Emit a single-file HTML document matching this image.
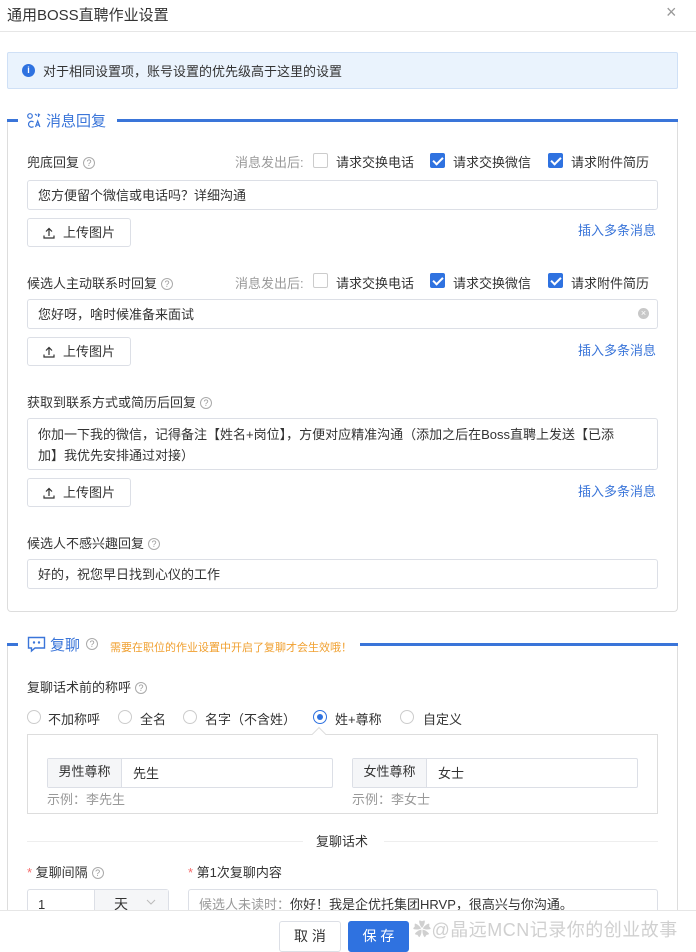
<!DOCTYPE html>
<html><head><meta charset="utf-8"><style>
*{box-sizing:border-box;margin:0;padding:0}
html,body{width:696px;height:952px;overflow:hidden}
body{background:#fff;font-family:"Liberation Sans","Noto Sans CJK SC",sans-serif;font-size:13px;color:#333;position:relative}
.a{position:absolute;white-space:nowrap}
.inp{position:absolute;border:1px solid #dcdfe6;border-radius:3px;background:#fff}
.btn{position:absolute;border:1px solid #dcdfe6;border-radius:3px;background:#fff;font-size:13px;color:#333;text-align:center}
.q{display:inline-block;width:12px;height:12px;border:1px solid #aaa;border-radius:50%;font-size:9px;line-height:10px;text-align:center;color:#999;vertical-align:1px;margin-left:4px}
.cb{position:absolute;width:15px;height:15px;border:1px solid #ccc;border-radius:2px;background:#fff}
.cb.on{background:#2f72e0;border-color:#2f72e0}
.cb.on:after{content:"";position:absolute;left:4px;top:1px;width:4px;height:8px;border:solid #fff;border-width:0 2px 2px 0;transform:rotate(45deg)}
.link{position:absolute;color:#3a75d9;font-size:13px}
.rd{position:absolute;width:14px;height:14px;border:1px solid #ccc;border-radius:50%;background:#fff}
.rd.on{border-color:#2f72e0}
.rd.on:after{content:"";position:absolute;left:3px;top:3px;width:6px;height:6px;border-radius:50%;background:#2f72e0}
.gray{color:#999}
.up{display:inline-block;vertical-align:-2px;margin-right:8px}
</style></head><body>
<div class="a" style="left:7px;top:4px;font-size:15px;color:#333">通用BOSS直聘作业设置</div>
<div class="a" style="left:666px;top:2px;font-size:18px;color:#999">×</div>
<div class="a" style="left:0;top:31px;width:696px;height:1px;background:#e6e6e6"></div>

<div class="a" style="left:7px;top:52px;width:671px;height:37px;background:#eaf3fd;border:1px solid #cfe0f6;border-radius:2px"></div>
<div class="a" style="left:22px;top:64px;width:13px;height:13px;border-radius:50%;background:#2f72e0;color:#fff;font-size:9px;line-height:13px;text-align:center;font-weight:bold">i</div>
<div class="a" style="left:43px;top:61px">对于相同设置项，账号设置的优先级高于这里的设置</div>

<!-- section 1 -->
<div class="a" style="left:7px;top:120px;width:671px;height:492px;border:1px solid #ddd;border-top:none;border-radius:0 0 4px 4px"></div>
<div class="a" style="left:7px;top:119px;width:11px;height:3px;background:#3a75d9"></div>
<div class="a" style="left:117px;top:119px;width:561px;height:3px;background:#3a75d9"></div>
<div class="a" style="left:19px;top:110px;width:96px;height:20px;background:#fff"></div>
<svg class="a" style="left:26px;top:112px" width="16" height="16" viewBox="0 0 16 16" fill="none" stroke="#3a75d9" stroke-width="1.2"><circle cx="4" cy="4" r="2.3"/><path d="M9 2l2 1.5M12.5 1.5v3.5M14 2.5l-1.5 1M7.5 10a3 3 0 1 0 0 4.5M9.5 15l2.2-6 2.2 6M10.3 13h2.8"/></svg>
<div class="a" style="left:46px;top:110px;font-size:15px;color:#3a75d9">消息回复</div>

<div class="a" style="left:27px;top:152px">兜底回复<span class="q">?</span></div>
<div class="a gray" style="left:235px;top:152px">消息发出后:</div>
<div class="cb" style="left:313px;top:153px"></div><div class="a" style="left:336px;top:152px">请求交换电话</div>
<div class="cb on" style="left:430px;top:153px"></div><div class="a" style="left:453px;top:152px">请求交换微信</div>
<div class="cb on" style="left:548px;top:153px"></div><div class="a" style="left:571px;top:152px">请求附件简历</div>
<div class="inp" style="left:27px;top:180px;width:631px;height:30px"></div>
<div class="a" style="left:38px;top:185px">您方便留个微信或电话吗？详细沟通</div>
<div class="btn" style="left:27px;top:218px;width:104px;height:29px;line-height:27px"><svg class="up" width="12" height="12" viewBox="0 0 12 12" fill="none" stroke="#333" stroke-width="1.2"><path d="M6 9V1.5M3 4.5L6 1.5 9 4.5M1 8.5v2.5h10V8.5"/></svg>上传图片</div>
<div class="link" style="left:578px;top:220px">插入多条消息</div>

<div class="a" style="left:27px;top:273px">候选人主动联系时回复<span class="q">?</span></div>
<div class="a gray" style="left:235px;top:273px">消息发出后:</div>
<div class="cb" style="left:313px;top:273px"></div><div class="a" style="left:336px;top:273px">请求交换电话</div>
<div class="cb on" style="left:430px;top:273px"></div><div class="a" style="left:453px;top:273px">请求交换微信</div>
<div class="cb on" style="left:548px;top:273px"></div><div class="a" style="left:571px;top:273px">请求附件简历</div>
<div class="inp" style="left:27px;top:299px;width:631px;height:30px"></div>
<div class="a" style="left:38px;top:304px">您好呀，啥时候准备来面试</div>
<div class="a" style="left:638px;top:308px;width:11px;height:11px;border-radius:50%;background:#c8c8c8;color:#fff;font-size:9px;line-height:11px;text-align:center">×</div>
<div class="btn" style="left:27px;top:337px;width:104px;height:29px;line-height:27px"><svg class="up" width="12" height="12" viewBox="0 0 12 12" fill="none" stroke="#333" stroke-width="1.2"><path d="M6 9V1.5M3 4.5L6 1.5 9 4.5M1 8.5v2.5h10V8.5"/></svg>上传图片</div>
<div class="link" style="left:578px;top:340px">插入多条消息</div>

<div class="a" style="left:27px;top:392px">获取到联系方式或简历后回复<span class="q">?</span></div>
<div class="inp" style="left:27px;top:418px;width:631px;height:52px"></div>
<div class="a" style="left:38px;top:424px;line-height:21px">你加一下我的微信，记得备注【姓名+岗位】，方便对应精准沟通（添加之后在Boss直聘上发送【已添<br>加】我优先安排通过对接）</div>
<div class="btn" style="left:27px;top:478px;width:104px;height:29px;line-height:27px"><svg class="up" width="12" height="12" viewBox="0 0 12 12" fill="none" stroke="#333" stroke-width="1.2"><path d="M6 9V1.5M3 4.5L6 1.5 9 4.5M1 8.5v2.5h10V8.5"/></svg>上传图片</div>
<div class="link" style="left:578px;top:481px">插入多条消息</div>

<div class="a" style="left:27px;top:533px">候选人不感兴趣回复<span class="q">?</span></div>
<div class="inp" style="left:27px;top:559px;width:631px;height:30px"></div>
<div class="a" style="left:38px;top:564px">好的，祝您早日找到心仪的工作</div>

<!-- section 2 -->
<div class="a" style="left:7px;top:644px;width:671px;height:300px;border:1px solid #ddd;border-top:none;border-bottom:none"></div>
<div class="a" style="left:7px;top:643px;width:11px;height:3px;background:#3a75d9"></div>
<div class="a" style="left:360px;top:643px;width:318px;height:3px;background:#3a75d9"></div>
<div class="a" style="left:19px;top:634px;width:340px;height:20px;background:#fff"></div>
<svg class="a" style="left:27px;top:636px" width="19" height="17" viewBox="0 0 19 17" fill="none" stroke="#3a75d9" stroke-width="1.4"><path d="M1.5 1.5h16v10.5H8l-3.5 3v-3h-3z"/><circle cx="7" cy="6.5" r=".5" fill="#3a75d9"/><circle cx="12" cy="6.5" r=".5" fill="#3a75d9"/></svg>
<div class="a" style="left:50px;top:634px;font-size:15px;color:#3a75d9">复聊</div>
<div class="a" style="left:82px;top:636px"><span class="q">?</span></div>
<div class="a" style="left:110px;top:639px;font-size:11px;color:#f0a030">需要在职位的作业设置中开启了复聊才会生效哦！</div>

<div class="a" style="left:27px;top:677px">复聊话术前的称呼<span class="q">?</span></div>
<div class="rd" style="left:27px;top:710px"></div><div class="a" style="left:48px;top:709px">不加称呼</div>
<div class="rd" style="left:118px;top:710px"></div><div class="a" style="left:140px;top:709px">全名</div>
<div class="rd" style="left:183px;top:710px"></div><div class="a" style="left:205px;top:709px">名字（不含姓）</div>
<div class="rd on" style="left:313px;top:710px"></div><div class="a" style="left:335px;top:709px">姓+尊称</div>
<div class="rd" style="left:400px;top:710px"></div><div class="a" style="left:423px;top:709px">自定义</div>

<div class="a" style="left:27px;top:734px;width:631px;height:80px;border:1px solid #ddd"></div>
<div class="a" style="left:314px;top:729px;width:10px;height:10px;background:#fff;border-left:1px solid #ddd;border-top:1px solid #ddd;transform:rotate(45deg)"></div>
<div class="inp" style="left:47px;top:758px;width:286px;height:30px;border-radius:2px"></div>
<div class="a" style="left:48px;top:759px;width:74px;height:28px;background:#f5f6f8;border-right:1px solid #dcdfe6;text-align:center;line-height:26px">男性尊称</div>
<div class="a" style="left:133px;top:763px">先生</div>
<div class="a gray" style="left:47px;top:789px">示例：李先生</div>
<div class="inp" style="left:352px;top:758px;width:286px;height:30px;border-radius:2px"></div>
<div class="a" style="left:353px;top:759px;width:74px;height:28px;background:#f5f6f8;border-right:1px solid #dcdfe6;text-align:center;line-height:26px">女性尊称</div>
<div class="a" style="left:438px;top:763px">女士</div>
<div class="a gray" style="left:352px;top:789px">示例：李女士</div>

<div class="a" style="left:27px;top:841px;width:276px;height:1px;background:#eee"></div>
<div class="a" style="left:316px;top:831px">复聊话术</div>
<div class="a" style="left:384px;top:841px;width:274px;height:1px;background:#eee"></div>

<div class="a" style="left:27px;top:862px"><span style="color:#f56c6c">* </span>复聊间隔<span class="q">?</span></div>
<div class="a" style="left:188px;top:862px"><span style="color:#f56c6c">* </span>第1次复聊内容</div>
<div class="inp" style="left:27px;top:889px;width:142px;height:40px"></div>
<div class="a" style="left:94px;top:890px;width:1px;height:30px;background:#dcdfe6"></div>
<div class="a" style="left:95px;top:890px;width:73px;height:30px;background:#f5f6f8"></div>
<div class="a" style="left:38px;top:897px">1</div>
<div class="a" style="left:114px;top:894px;font-size:14px">天</div>
<svg class="a" style="left:146px;top:899px" width="10" height="6" viewBox="0 0 10 6" fill="none" stroke="#bbb"><path d="M1 1l4 4 4-4"/></svg>
<div class="inp" style="left:188px;top:889px;width:470px;height:40px"></div>
<div class="a" style="left:199px;top:894px"><span class="gray">候选人未读时：</span>你好！我是企优托集团HRVP，很高兴与你沟通。</div>

<!-- footer -->
<div class="a" style="left:0;top:910px;width:696px;height:42px;background:#fff;border-top:1px solid #e6e6e6"></div>
<div class="btn" style="left:279px;top:921px;width:62px;height:31px;line-height:29px;font-size:14px">取 消</div>
<div class="btn" style="left:348px;top:921px;width:61px;height:31px;line-height:29px;background:#2f72e0;border-color:#2f72e0;color:#fff;font-size:14px">保 存</div>
<div class="a" style="left:413px;top:916px;font-size:18px;color:#d0d0d0;letter-spacing:0.5px">✿@晶远MCN记录你的创业故事</div>
</body></html>
